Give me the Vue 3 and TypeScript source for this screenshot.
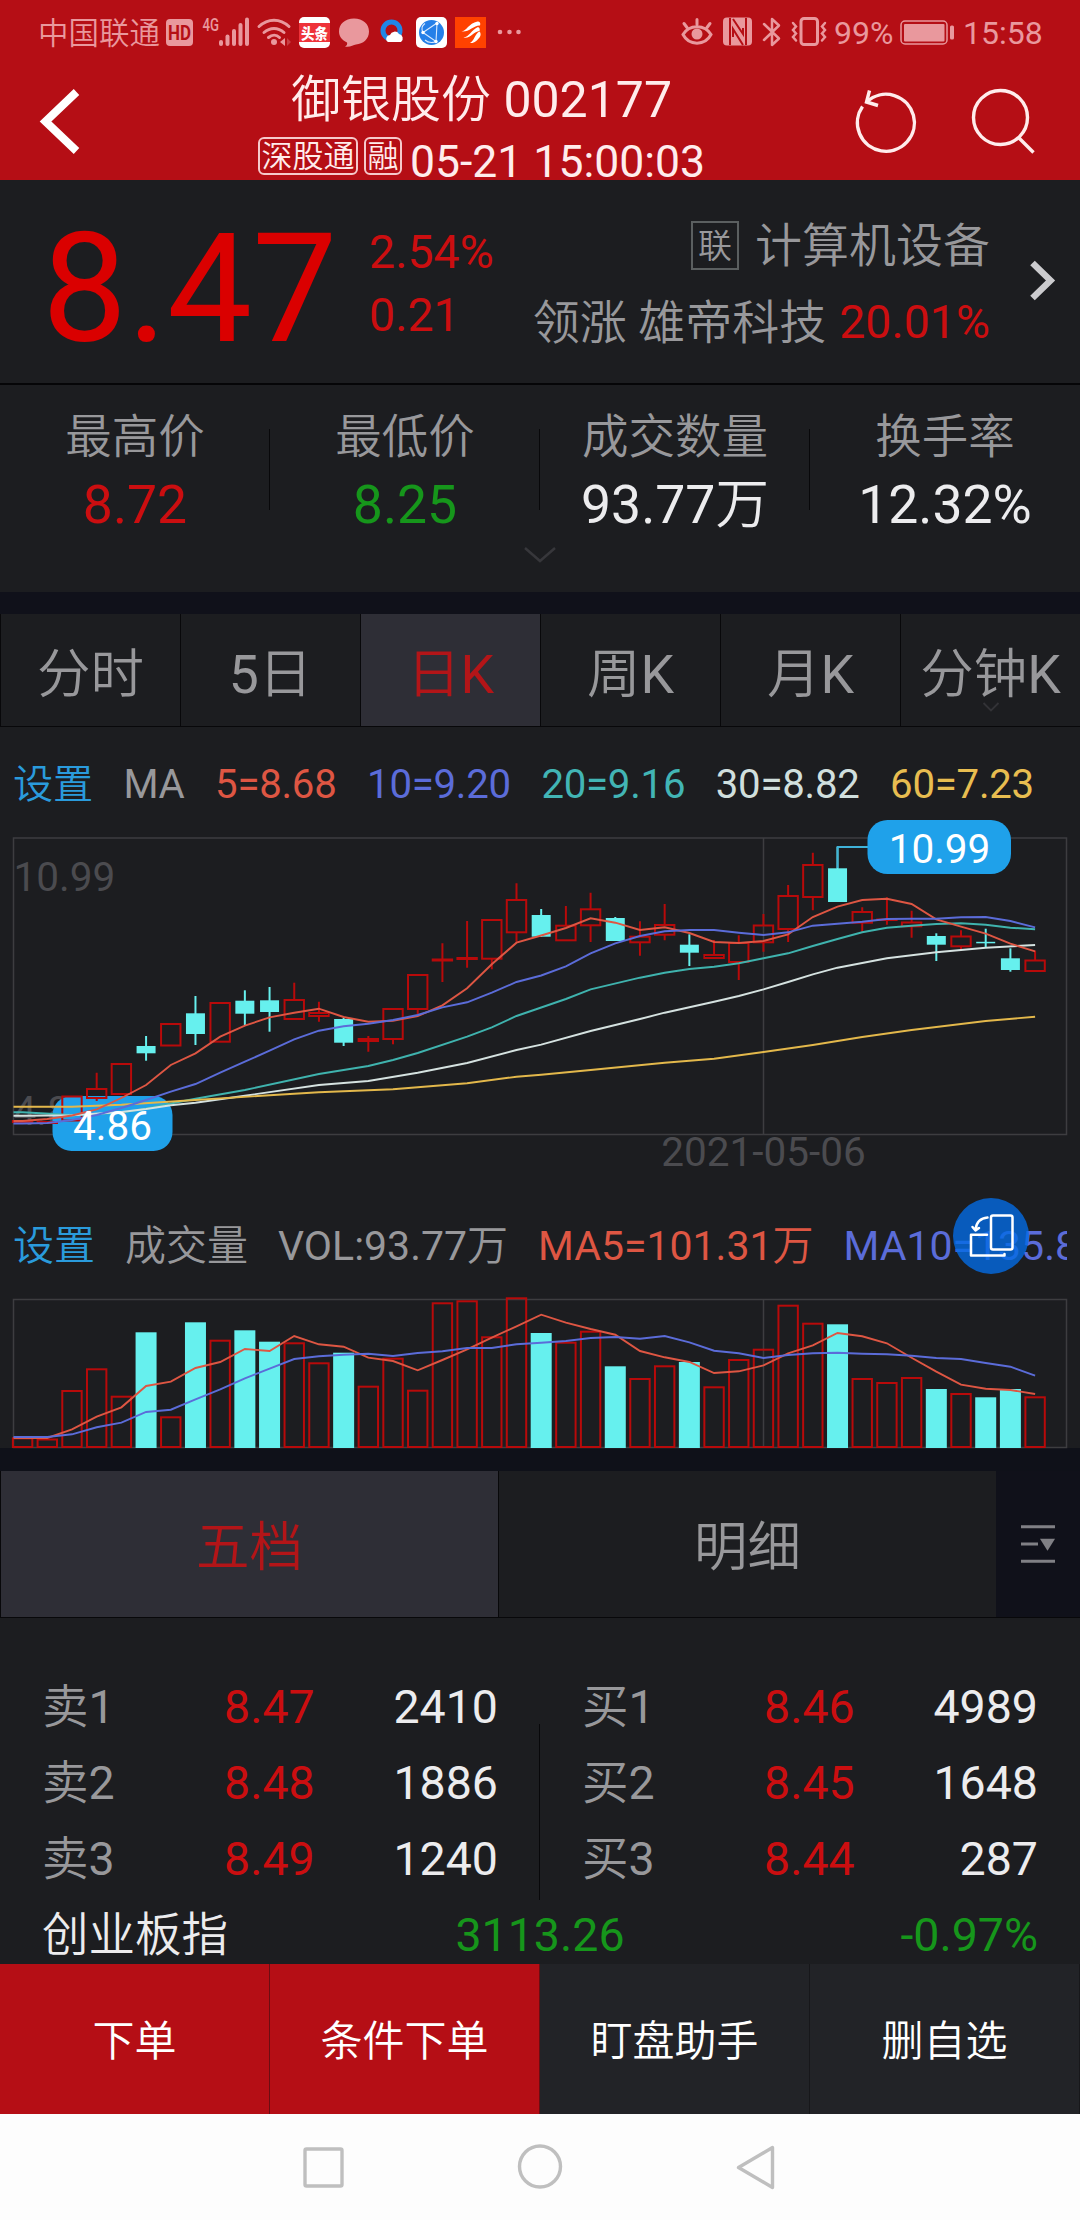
<script setup lang="ts">
type Candle = [up: number, open: number, close: number, high: number, low: number]
type Point = [index: number, y: number]

const STEP = 24.695
const FIRST = 22.6
const cx = (i: number): number => FIRST + STEP * i

// up flag, body top, body bottom, wick top, wick bottom
const candles: Candle[] = [
  [1, 1121, 1122, 1121, 1122], [1, 1122, 1123, 1122, 1123], [1, 1096.5, 1120.5, 1096, 1121],
  [1, 1089, 1098, 1072.7, 1101], [1, 1064, 1094, 1064, 1094], [0, 1046, 1053.3, 1036, 1060.7],
  [1, 1024, 1045.5, 1024, 1045], [0, 1013.3, 1034, 996, 1045], [1, 1003, 1041.7, 1003, 1041],
  [0, 1000.7, 1013.7, 990.3, 1025], [0, 1000.3, 1012, 987, 1031.7], [1, 1000, 1019, 982.7, 1019],
  [1, 1013, 1016, 1001.7, 1021.7], [0, 1019, 1042.7, 1017.7, 1046], [1, 1039, 1041, 1036, 1051.7],
  [1, 1009, 1039, 1009, 1044.3], [1, 975, 1009, 975, 1014], [1, 959.5, 960.5, 943.3, 982],
  [1, 958, 959, 921, 967.7], [1, 920, 958.7, 920, 969.3], [1, 900, 932.3, 883.3, 941.7],
  [0, 915, 936.7, 909, 937], [1, 925.7, 940.3, 906, 940], [1, 909.3, 925.3, 892.7, 942],
  [0, 918, 941, 917, 941], [1, 936.7, 942.3, 921.3, 955.7], [1, 925, 934.7, 904, 940.3],
  [0, 944.7, 952.7, 934.3, 966], [1, 955, 958, 940, 958], [1, 943, 962, 935.3, 980],
  [1, 925.5, 942.3, 914, 951.7], [1, 896, 929, 885, 942], [1, 865, 897, 852.7, 910.3],
  [0, 868.3, 902, 847, 902], [1, 912, 922.7, 907.3, 931.7], [1, 919.5, 920, 897.3, 924.7],
  [1, 922.5, 926.3, 910.7, 937.7], [0, 936, 944.7, 933.3, 961], [1, 936.5, 946.3, 930.3, 950.3],
  [0, 941.8, 943.3, 928.7, 947], [0, 958.3, 970, 948.3, 971.7], [1, 960.5, 971, 950.7, 971],
]

const volumeTops: number[] = [
  1438.3, 1439.5, 1391, 1369.3, 1396.7, 1332.3, 1417.3, 1322.3, 1340.7, 1330.3, 1341.7, 1343.3, 1363.3, 1352.7,
  1386.7, 1358.7, 1390.7, 1303.3, 1301.3, 1337.3, 1298.3, 1333, 1342.7, 1331.7, 1366.3, 1379, 1366.3, 1362,
  1387.3, 1360, 1349.7, 1305.7, 1323.7, 1324.3, 1379, 1383, 1378, 1389, 1394, 1397.3, 1389, 1397.3,
]

const dense = (ys: number[]): Point[] => ys.map((y, i): Point => [i, y])
const path = (pts: Point[]): string => `13.5,${pts[0][1]} ` + pts.map(([i, y]) => `${cx(i).toFixed(1)},${y}`).join(' ')

const priceLines = [
  {
    color: '#3fb3ae',
    points: path([[0, 1112.3], [2, 1115], [4, 1112.7], [5, 1108.5], [6, 1103.5], [7, 1098.7], [9, 1090], [12, 1074], [14, 1066], [15, 1060], [16, 1053], [18, 1036.7], [19, 1027.3], [20, 1016], [21, 1007.5], [22, 999], [23, 989.3], [25, 977.7], [26, 972.7], [27, 969], [28, 966.7], [29, 963.3], [30, 958.3], [31, 953.3], [32, 946], [33, 939], [34, 932.3], [35, 927.7], [36, 925.7], [37, 924], [38, 923.3], [39, 924.7], [40, 927.7], [41, 929.3]]),
  },
  {
    color: '#d5e2e0',
    points: path([[0, 1115.7], [2, 1115.3], [4, 1112], [5, 1109], [6, 1105.3], [7, 1102.7], [9, 1095.7], [12, 1085], [14, 1081], [16, 1072.7], [18, 1063], [20, 1050], [21, 1044.7], [23, 1031], [25, 1019], [26, 1012.7], [28, 1001.7], [29, 996], [30, 989.3], [31, 982], [32, 974.3], [33, 967.7], [35, 958.3], [37, 952.3], [39, 947.7], [41, 945]]),
  },
  {
    color: '#e3b84b',
    points: path([[0, 1106.7], [2, 1106.7], [4, 1104.7], [7, 1100], [10, 1095.3], [12, 1092.3], [15, 1089.3], [18, 1083.3], [20, 1076.7], [21, 1074.7], [23, 1070], [26, 1062.7], [28, 1058.7], [30, 1052], [32, 1045], [34, 1037], [36, 1030], [39, 1021], [41, 1016.7]]),
  },
  {
    color: '#de5643',
    points: path(dense([1121, 1119, 1115.5, 1109.3, 1098, 1085, 1065, 1053.3, 1036.7, 1025.7, 1017.3, 1012.7, 1008.7, 1017, 1021.7, 1020.7, 1016, 1005.3, 988.3, 964.3, 942.7, 935.5, 928, 918.3, 922.7, 930, 927.3, 933, 942, 943, 941, 934.3, 917, 906.7, 900, 898.7, 904, 919.3, 926.7, 933.7, 943.7, 951.3])),
  },
  {
    color: '#5b6cd9',
    points: path(dense([1123.5, 1123, 1120, 1115, 1108, 1100, 1091.7, 1084, 1072.7, 1061.7, 1050.7, 1039.3, 1030.7, 1026.3, 1023.7, 1020, 1015, 1007.3, 1002.3, 992.7, 982, 975.5, 966.3, 953.3, 943.3, 936, 931.3, 930, 930, 932.7, 935, 932.3, 925.7, 923.7, 921.7, 919, 918.7, 918.7, 917.3, 917, 921, 927.3])),
  },
]

const volumeLines = [
  {
    color: '#de5643',
    points: path(dense([1438, 1438, 1429.3, 1416.7, 1407.3, 1386, 1381.7, 1368, 1362, 1349, 1351, 1336, 1344.3, 1346.7, 1357.7, 1361, 1370.3, 1360, 1349.3, 1337.7, 1326.3, 1314.7, 1322.7, 1329, 1334.7, 1351, 1357.3, 1362, 1373, 1371.3, 1365.3, 1353.3, 1345.3, 1333, 1336.3, 1343.3, 1357.7, 1371.7, 1384.7, 1388.7, 1390, 1394])),
  },
  {
    color: '#5b6cd9',
    points: path(dense([1437, 1437, 1434.3, 1427.3, 1422.7, 1412, 1409.7, 1399.3, 1389.3, 1378.3, 1368.7, 1359, 1356.3, 1354.7, 1353.7, 1356, 1353, 1351.3, 1348, 1348, 1344.3, 1342.7, 1341, 1338, 1337, 1338.7, 1336, 1342.3, 1350.7, 1353.3, 1358, 1355, 1353.3, 1352.7, 1353.7, 1354.3, 1355.7, 1358, 1359, 1363, 1366.7, 1375.7])),
  },
]

// splits a label into runs so that Chinese characters can take a lighter weight than digits
const runs = (text: string): { s: string; han: boolean }[] =>
  text.split(/([\u4e00-\u9fa5]+)/).filter(Boolean).map((s) => ({ s, han: /[\u4e00-\u9fa5]/.test(s) }))

const stats = [
  { label: '最高价', value: '8.72', tone: 'red' },
  { label: '最低价', value: '8.25', tone: 'green' },
  { label: '成交数量', value: '93.77万', tone: 'white' },
  { label: '换手率', value: '12.32%', tone: 'white' },
]
const periods = ['分时', '5日', '日K', '周K', '月K', '分钟K']
const averages = [
  { text: '5=8.68', color: '#de5643' },
  { text: '10=9.20', color: '#5b6cd9' },
  { text: '20=9.16', color: '#42b5b5' },
  { text: '30=8.82', color: '#d0dfdd' },
  { text: '60=7.23', color: '#e8bd50' },
]
const book = [
  [['卖1', '8.47', '2410'], ['卖2', '8.48', '1886'], ['卖3', '8.49', '1240']],
  [['买1', '8.46', '4989'], ['买2', '8.45', '1648'], ['买3', '8.44', '287']],
]
const actions = ['下单', '条件下单', '盯盘助手', '删自选']
</script>

<template>
  <div class="app">
    <header class="top">
      <div class="status">
        <span class="carrier thin">中国联通</span>
        <svg class="tray" width="380" height="60" viewBox="162 0 380 60">
          <g fill="#e9989d">
            <rect x="166" y="19" width="27" height="27" rx="4" />
            <text x="168" y="40" font-size="20" font-weight="700" fill="#b50e15" textLength="23" lengthAdjust="spacingAndGlyphs">HD</text>
            <text x="202.500" y="30.500" font-size="18" font-weight="500" textLength="16.500" lengthAdjust="spacingAndGlyphs">4G</text>
            <rect x="219" y="40" width="4" height="6" rx="2" />
            <rect x="225.500" y="34.500" width="4" height="11.500" rx="2" />
            <rect x="232" y="29" width="4" height="17" rx="2" />
            <rect x="238.500" y="23" width="4" height="23" rx="2" />
            <rect x="245" y="17.500" width="4" height="28.500" rx="2" />
            <circle cx="274" cy="42" r="3" />
            <path d="M280 42l5-4v8z" />
            <path d="M291 42l-4-4v8z" opacity=".35" />
            <path d="M354 18.500c9 0 15 5.500 15 13s-6 12.500-13 13c-3 .5-6 3-11 2 2-1 2.500-2.500 2-4-5-2.500-8-6-8-11 0-7.500 6-13 15-13z" />
            <circle cx="500" cy="32" r="2.300" /><circle cx="509.500" cy="32" r="2.300" /><circle cx="518.500" cy="32" r="2.300" />
          </g>
          <g fill="none" stroke="#e9989d" stroke-width="3" stroke-linecap="round">
            <path d="M259 26.500c9-8.500 21-8.500 30 0M264 32.500c6-5.500 14-5.500 20 0M268.500 37.500c3.500-3 8-3 11 0" />
          </g>
          <rect x="299" y="17" width="31" height="31" rx="5" fill="#fff" />
          <rect x="299" y="23" width="31" height="19" fill="#ee3239" />
          <text x="301" y="39" font-size="15" font-weight="900" fill="#fff" textLength="27" lengthAdjust="spacingAndGlyphs">头条</text>
          <circle cx="391.500" cy="30.500" r="8.500" fill="none" stroke="#2186e6" stroke-width="5" />
          <path d="M388 42a3.800 3.800 0 0 1 2-7 5 5 0 0 1 9-1 4.500 4.500 0 0 1 2 8z" fill="#fff" />
          <rect x="416" y="17" width="31" height="31" rx="5" fill="#fff" />
          <circle cx="431.500" cy="32.500" r="12.500" fill="#257fe8" />
          <path d="M423 32.500l14-9.500M423 32.500l13 9M437 23.500l-1 18M423 32.500c-2-4-1-7 2-9M435 42c-4 1-8 0-10-2" fill="none" stroke="#d8e9ff" stroke-width="1.100" />
          <circle cx="423" cy="32.500" r="1.700" fill="#fff" /><circle cx="437" cy="23.500" r="1.700" fill="#fff" /><circle cx="436" cy="41.500" r="1.700" fill="#fff" />
          <rect x="455" y="17" width="31" height="31" fill="#ff4200" />
          <path d="M461.500 31.500c5-.5 7-8 16-10 2 0 3.500 1.500 2.500 4-6-.5-11 7-18.500 6zM463.500 37.500c6-.5 8-8 14.500-10.500 2 .5 2 2.500 1.500 4-6 .5-9 8-16 6.500zM470 43c5-3 4.500-9 9.500-11.500 1.500 1.500 1.500 4 0 6-2.500 3-5 6-9.500 5.500z" fill="#fff" />
        </svg>
        <svg class="sys" width="156" height="60" viewBox="678 0 156 60">
          <g fill="none" stroke="#e9989d" stroke-width="3" stroke-linecap="round">
            <path d="M683 34.500c6-10.500 22-10.500 28 0-6 11.500-22 11.500-28 0zM697 19.500v5M684 23.500l3 4M710 23.500l-3 4" />
            <path d="M764 24l15 14.500-7 6.500V19l7 6.500L764 40" stroke-width="2.500" stroke-linejoin="round" />
            <rect x="801" y="18.500" width="16.500" height="26" rx="3" />
            <path d="M793 23l3 3.500-3 3.500 3 3.500-3 3.500 3 3.500M825 23l-3 3.500 3 3.500-3 3.500 3 3.500-3 3.500" stroke-width="2.500" />
          </g>
          <circle cx="697" cy="34" r="5.500" fill="#e9989d" />
          <rect x="723" y="17.500" width="29" height="28" rx="4" fill="#e9989d" />
          <path d="M730 18v27M746 45V18M733 19l10 15v-6M743 45l-10-16v8" fill="none" stroke="#b50e15" stroke-width="2" />
        </svg>
        <span class="battery-text">99%</span>
        <svg class="battery" width="56" height="60" viewBox="899 0 56 60">
          <rect x="901" y="21" width="46" height="23" rx="4" fill="none" stroke="#e9989d" stroke-width="1.500" />
          <rect x="904" y="24" width="40.500" height="17.500" rx="1" fill="#e9989d" />
          <rect x="950" y="25.500" width="4" height="14" rx="1.500" fill="#e9989d" />
        </svg>
        <span class="clock">15:58</span>
      </div>
      <div class="titlebar">
        <svg width="180" height="120" viewBox="0 60 180 120">
          <path d="M76.500 92L45.500 121.500l31 29.500" fill="none" stroke="#fff" stroke-width="8" />
        </svg>
        <div class="title">
          <div class="name"><span class="thin">御银股份</span> 002177</div>
          <div class="meta">
            <span class="tag wide thin">深股通</span><span class="tag thin">融</span><span class="time">05-21 15:00:03</span>
          </div>
        </div>
        <svg class="tools" width="240" height="120" viewBox="840 60 240 120">
          <g fill="none" stroke="#ffecec" stroke-width="3.400">
            <path d="M862.500 106.500a28.500 28.500 0 1 0 5-5.500" />
            <path d="M869.500 90.500l-3 11.500 11.500 3.500" />
            <circle cx="1000.500" cy="117.500" r="27" />
            <path d="M1018 137l15.500 15.500" />
          </g>
        </svg>
      </div>
    </header>

    <section class="quote">
      <div class="price">8.47</div>
      <div class="change"><div>2.54%</div><div>0.21</div></div>
      <div class="sector">
        <div class="line"><span class="link thin">联</span><span class="thin">计算机设备</span></div>
        <div class="line"><span class="thin">领涨 雄帝科技</span><span class="gain">20.01%</span></div>
      </div>
      <svg class="go" width="90" height="203" viewBox="990 180 90 203">
        <path d="M1032.500 263l18 17.500-18 17.500" fill="none" stroke="#cbcbce" stroke-width="6.500" />
      </svg>
    </section>

    <section class="stats">
      <div v-for="s in stats" :key="s.label" class="stat">
        <div class="label thin">{{ s.label }}</div>
        <div class="value" :class="s.tone"><span v-for="r in runs(s.value)" :key="r.s" :class="{ thin: r.han }">{{ r.s }}</span></div>
      </div>
      <svg class="more" width="36" height="20" viewBox="0 0 36 20"><path d="M3 3l15 13L33 3" fill="none" stroke="#37373b" stroke-width="2.500" /></svg>
    </section>

    <nav class="periods">
      <div v-for="p in periods" :key="p" class="period" :class="{ active: p === '日K' }">
        <span v-for="r in runs(p)" :key="r.s" :class="{ thin: r.han }">{{ r.s }}</span>
        <svg v-if="p === '分钟K'" class="drop" width="18" height="12" viewBox="0 0 18 12"><path d="M1.500 2L9 9.500 16.500 2" fill="none" stroke="#333337" stroke-width="1.800" /></svg>
      </div>
    </nav>

    <div class="legend">
      <span class="set thin">设置</span><span class="ma">MA</span>
      <span v-for="a in averages" :key="a.text" :style="{ color: a.color }">{{ a.text }}</span>
    </div>

    <svg class="chart" width="1080" height="352" viewBox="0 838 1080 352">
      <g fill="none" stroke="#3d3d40" stroke-width="1.500">
        <rect x="13.500" y="838" width="1053" height="296.500" />
        <path d="M763.500 838v296.500" />
      </g>
      <g fill="#4b4b4f" font-size="40.500">
        <text x="13.500" y="890.700">10.99</text>
        <text x="13.500" y="1125">4.86</text>
        <text x="763.500" y="1166" text-anchor="middle">2021-05-06</text>
      </g>
      <rect x="52.500" y="1096" width="120" height="55" rx="19" fill="#1fa1ea" />
      <g v-for="(c, i) in candles" :key="i">
        <template v-if="c[0]">
          <path :d="`M${cx(i)} ${c[3]}V${c[1]}M${cx(i)} ${c[2]}V${c[4]}`" stroke="#b80a0a" stroke-width="2" />
          <rect :x="cx(i) - 9.7" :y="c[1]" width="19.400" :height="c[2] - c[1]" fill="none" stroke="#b80a0a" stroke-width="2" />
        </template>
        <template v-else>
          <path :d="`M${cx(i)} ${c[3]}V${c[4]}`" stroke="#66f0ee" stroke-width="2" />
          <rect :x="cx(i) - 9.5" :y="c[1]" width="19" :height="c[2] - c[1]" fill="#66f0ee" />
        </template>
      </g>
      <polyline v-for="l in priceLines" :key="l.color" :points="l.points" fill="none" :stroke="l.color" stroke-width="1.900" />
      <text x="112.500" y="1140" font-size="40.500" fill="#fff" text-anchor="middle">4.86</text>
      <path d="M837.500 868V847H868" fill="none" stroke="#3fb2d8" stroke-width="1.800" />
      <rect x="867.500" y="820" width="143.500" height="54" rx="20" fill="#1fa1ea" />
      <text x="939.500" y="862.500" font-size="40.500" fill="#fff" text-anchor="middle">10.99</text>
    </svg>

    <div class="volume-head">
      <div class="legend volume">
        <span class="set thin">设置</span><span class="thin">成交量</span><span>VOL:93.77<b class="thin">万</b></span>
        <span class="v5">MA5=101.31<b class="thin">万</b></span><span class="v10">MA10=135.8</span>
      </div>
      <div class="rotate">
        <svg width="76" height="76" viewBox="953 1198 76 76">
          <g fill="none" stroke="#fff" stroke-width="2.500" stroke-linecap="round" stroke-linejoin="round">
            <rect x="991" y="1215.500" width="21.500" height="34" rx="2" />
            <path d="M987 1234.700h-16v20.800h33.500v-1.500" />
            <path d="M987.500 1217.500c-7 .5-11 4.500-12 12M972.500 1227l3 3.500 3.500-2.500" />
          </g>
        </svg>
      </div>
    </div>

    <svg class="chart" width="1080" height="149" viewBox="0 1299 1080 149">
      <g fill="none" stroke="#3d3d40" stroke-width="1.500">
        <rect x="13.500" y="1299.500" width="1053" height="148" />
        <path d="M763.500 1299v149" />
      </g>
      <g v-for="(top, i) in volumeTops" :key="i">
        <rect v-if="candles[i][0]" :x="cx(i) - 9.7" :y="top" width="19.400" :height="1447 - top" fill="none" stroke="#b80a0a" stroke-width="2" />
        <rect v-else :x="cx(i) - 10.5" :y="top" width="21" :height="1448 - top" fill="#66f0ee" />
      </g>
      <polyline v-for="l in volumeLines" :key="l.color" :points="l.points" fill="none" :stroke="l.color" stroke-width="1.900" />
    </svg>

    <nav class="depth-tabs">
      <div class="depth-tab thin active">五档</div>
      <div class="depth-tab thin">明细</div>
      <svg width="84" height="146" viewBox="996 1471 84 146">
        <path d="M1021 1526.700h34M1021 1544h17M1021 1561.300h34" stroke="#808085" stroke-width="3" />
        <path d="M1040 1538.700h15l-7.500 12z" fill="#808085" />
      </svg>
    </nav>

    <section class="book">
      <div v-for="(side, n) in book" :key="n" class="side">
        <div v-for="r in side" :key="r[0]" class="row">
          <span class="lvl"><span v-for="t in runs(r[0])" :key="t.s" :class="{ thin: t.han }">{{ t.s }}</span></span>
          <span class="p">{{ r[1] }}</span><span class="q">{{ r[2] }}</span>
        </div>
      </div>
      <i class="split"></i>
    </section>
    <div class="index"><span class="iname thin">创业板指</span><span>3113.26</span><span class="ichg">-0.97%</span></div>

    <div class="actions">
      <div v-for="(a, i) in actions" :key="a" class="action thin" :class="{ trade: i < 2 }">{{ a }}</div>
    </div>

    <svg class="sysnav" width="1080" height="106" viewBox="0 2114 1080 106">
      <g fill="none" stroke="#bfbfbf" stroke-width="3.400" stroke-linejoin="round">
        <rect x="305" y="2149" width="37" height="37" rx="1.500" />
        <circle cx="540" cy="2166.500" r="20.500" />
        <path d="M772.500 2147.500v40l-34-20z" />
      </g>
    </svg>
  </div>
</template>

<style>
body {
  margin: 0;
  background: #1c1d20;
}
</style>

<style scoped>
.app {
  width: 1080px;
  height: 2220px;
  overflow: hidden;
  background: #1c1d20;
  color: #98989b;
  font-family: Roboto, "Noto Sans CJK SC", sans-serif;
  white-space: nowrap;
}
svg {
  display: block;
  flex: none;
}
.thin {
  font-weight: 350;
}
.top {
  height: 180px;
  background: #b50e15;
  color: #ffecec;
}
.status {
  height: 60px;
  display: flex;
  align-items: center;
  color: #e9989d;
  font-size: 32px;
  line-height: 60px;
}
.carrier {
  width: 124px;
  margin-left: 38px;
  font-size: 30.5px;
  padding-top: 4px;
  height: 56px;
}
.sys {
  margin-left: 136px;
}
.battery-text {
  width: 65px;
  padding-top: 6px;
}
.clock {
  margin-left: 8px;
  padding-top: 6px;
}
.titlebar {
  height: 120px;
  display: flex;
}
.tools {
  margin-left: auto;
}
.title {
  display: flex;
  flex-direction: column;
  margin-left: 78px;
  padding-top: 13px;
}
.name {
  font-size: 50px;
  line-height: 54px;
  text-align: center;
}
.meta {
  display: flex;
  align-items: center;
  height: 36px;
  padding-top: 17px;
  font-size: 44.5px;
  line-height: 36px;
}
.tag {
  box-sizing: border-box;
  width: 38px;
  height: 38px;
  margin: -12px 8px 0 0;
  border: 2px solid #f6c9cb;
  border-radius: 6px;
  font-size: 31px;
  line-height: 36px;
  text-align: center;
}
.tag.wide {
  width: 100px;
  margin-right: 6px;
}
.quote {
  height: 203px;
  display: flex;
  border-bottom: 2px solid #050507;
}
.price {
  width: 327px;
  margin: 34px 0 0 42px;
  font-size: 151.5px;
  line-height: 151px;
  color: #da0000;
}
.change {
  padding-top: 41px;
  font-size: 46.5px;
  line-height: 63px;
  color: #cb0e10;
}
.sector {
  margin-left: auto;
  padding-top: 27px;
  font-size: 47px;
}
.line {
  height: 77px;
  display: flex;
  align-items: center;
  justify-content: flex-end;
  line-height: 77px;
}
.link {
  box-sizing: border-box;
  width: 48px;
  height: 49px;
  margin-right: 16px;
  border: 2.5px solid #5b5f60;
  font-size: 34px;
  line-height: 47px;
  text-align: center;
}
.gain {
  margin-left: 13px;
  font-size: 46.5px;
  color: #cb0e10;
}
.stats {
  position: relative;
  height: 207px;
  display: flex;
}
.stat {
  width: 270px;
  padding-top: 19px;
  text-align: center;
  background: linear-gradient(#08080a, #08080a) no-repeat right 44px / 1px 81px;
}
.stat:nth-child(4) {
  background: none;
}
.label {
  font-size: 46.5px;
  line-height: 67px;
}
.value {
  font-size: 53.5px;
  line-height: 67px;
}
.red {
  color: #cb0e10;
}
.green {
  color: #16961b;
}
.white {
  color: #ececee;
}
.more {
  position: absolute;
  left: 522px;
  top: 160px;
}
.periods {
  height: 113px;
  border-top: 22px solid #10111a;
  display: flex;
}
.period {
  position: relative;
  box-sizing: border-box;
  width: 180px;
  height: 113px;
  padding-top: 7px;
  border-left: 1px solid #08080a;
  border-bottom: 1px solid #08080a;
  font-size: 53.5px;
  line-height: 107px;
  text-align: center;
}
.period.active {
  background: #2e2e36;
  color: #b31518;
}
.drop {
  position: absolute;
  left: 81px;
  top: 87px;
}
.legend {
  height: 107px;
  padding: 4px 0 0 13px;
  display: flex;
  gap: 30.5px;
  font-size: 40.2px;
  letter-spacing: -0.25px;
  line-height: 108px;
}
.set {
  color: #2a9bdc;
}
.chart {
  overflow: visible;
}
.volume-head {
  position: relative;
  height: 109px;
}
.legend.volume {
  width: 1053.5px;
  height: 107px;
  padding-top: 2px;
  gap: 30px;
  overflow: hidden;
  font-size: 41px;
  letter-spacing: 0;
}
.v5 {
  color: #de5643;
}
.v10 {
  color: #5b6cd9;
}
.rotate {
  position: absolute;
  left: 953px;
  top: 8px;
  width: 76px;
  height: 76px;
  border-radius: 50%;
  background: rgba(4, 107, 228, 0.8);
}
.depth-tabs {
  height: 146px;
  display: flex;
  border-top: 23px solid #0f1119;
  border-bottom: 1px solid #08080a;
  background: #10111a;
}
.depth-tab {
  box-sizing: border-box;
  width: 498px;
  border-left: 1px solid #08080a;
  background: #1c1d20;
  font-size: 53.5px;
  line-height: 154px;
  text-align: center;
}
.depth-tab.active {
  background: #2e2e36;
  color: #b31518;
}
.book {
  position: relative;
  height: 228px;
  padding-top: 51px;
  display: flex;
}
.side {
  box-sizing: border-box;
  width: 540px;
  padding: 0 42px;
}
.row {
  height: 76px;
  display: flex;
  font-size: 46.5px;
  line-height: 76px;
}
.lvl {
  width: 182px;
}
.q {
  margin-left: auto;
  color: #ececee;
}
.p {
  color: #cb0e10;
}
.split {
  position: absolute;
  left: 539px;
  top: 106px;
  width: 1px;
  height: 176px;
  background: #08080a;
}
.index {
  height: 67px;
  padding: 0 42px;
  display: grid;
  grid-template-columns: 1fr auto 1fr;
  font-size: 46.5px;
  line-height: 76px;
  color: #16961b;
}
.iname {
  color: #ececee;
}
.ichg {
  text-align: right;
}
.actions {
  height: 150px;
  display: flex;
}
.action {
  box-sizing: border-box;
  width: 270px;
  border-right: 1px solid #17171a;
  background: #222327;
  color: #fff;
  font-size: 42px;
  line-height: 155px;
  text-align: center;
}
.trade {
  background: #b50e15;
  border-color: #6b0d12;
}
.sysnav {
  background: #fdfdfd;
}
</style>
